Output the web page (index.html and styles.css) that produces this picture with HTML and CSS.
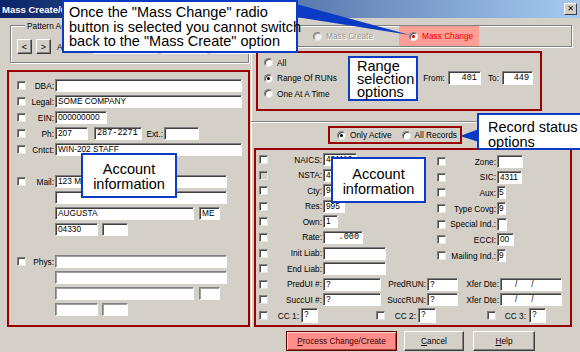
FILE: index.html
```html
<!DOCTYPE html>
<html>
<head>
<meta charset="utf-8">
<title>Mass Create/Change</title>
<link rel="stylesheet" href="styles.css">
</head>
<body>
<div class="win">
  <div class="title">
    <span class="title-text">Mass Create/Change</span>
    <span class="close">&#x2715;</span>
  </div>

  <div class="main">
    <div class="lcol">
      <div class="pattern">
        <span class="legend">Pattern Account</span>
        <div class="nav">
          <span class="navbtn">&lt;</span>
          <span class="navbtn">&gt;</span>
          <span class="navlbl">Account:</span>
          <span class="inp w65"></span>
          <span class="inp w47"></span>
          <span class="inp w47"></span>
        </div>
      </div>

      <div class="rbox lacct">
        <div class="row"><span class="cb"></span><span class="lbl">DBA:</span><span class="inp w187"></span></div>
        <div class="row"><span class="cb"></span><span class="lbl">Legal:</span><span class="inp w187">SOME COMPANY</span></div>
        <div class="row"><span class="cb"></span><span class="lbl">EIN:</span><span class="inp w52">000000000</span></div>
        <div class="row"><span class="cb"></span><span class="lbl">Ph:</span><span class="inp w33">207</span><span class="inp w48 mono ml6">287-2271</span><span class="lbl ext">Ext.:</span><span class="inp w35"></span></div>
        <div class="row"><span class="cb"></span><span class="lbl">Cntct:</span><span class="inp w187">WIN-202 STAFF</span></div>
        <div class="row"></div>
        <div class="row"><span class="cb"></span><span class="lbl">Mail:</span><span class="inp w172">123 MAIN ST</span></div>
        <div class="row"><span class="cb hide"></span><span class="lbl"></span><span class="inp w172"></span></div>
        <div class="row"><span class="cb hide"></span><span class="lbl"></span><span class="inp w139">AUGUSTA</span><span class="inp w21 ml5">ME</span></div>
        <div class="row"><span class="cb hide"></span><span class="lbl"></span><span class="inp w43">04330</span><span class="inp w26 ml4"></span></div>
        <div class="row"></div>
        <div class="row"><span class="cb"></span><span class="lbl">Phys:</span><span class="inp w172 light"></span></div>
        <div class="row"><span class="cb hide"></span><span class="lbl"></span><span class="inp w172 light"></span></div>
        <div class="row"><span class="cb hide"></span><span class="lbl"></span><span class="inp w139 light"></span><span class="inp w21 ml5 light"></span></div>
        <div class="row"><span class="cb hide"></span><span class="lbl"></span><span class="inp w43 light"></span><span class="inp w26 ml4 light"></span></div>
      </div>
    </div>

    <div class="rcol">
      <div class="mode">
        <span class="radio dis"><i class="rd"></i>Mass Create</span>
        <span class="radio hl"><i class="rd on"></i>Mass Change</span>
      </div>

      <div class="rbox range">
        <div class="radios">
          <span class="radio"><i class="rd"></i>All</span>
          <span class="radio"><i class="rd on"></i>Range Of RUNs</span>
          <span class="radio"><i class="rd"></i>One At A Time</span>
        </div>
        <div class="fromto">
          <span>From:</span>
          <span class="inp num w33 mono">401</span>
          <span class="to">To:</span>
          <span class="inp num w31 mono">449</span>
        </div>
      </div>

      <div class="sep"></div>

      <div class="rbox status">
        <span class="radio"><i class="rd on"></i>Only Active</span>
        <span class="radio"><i class="rd"></i>All Records</span>
      </div>

      <div class="rbox racct">
        <div class="top">
          <div class="colL">
            <div class="row"><span class="cb"></span><span class="lbl">NAICS:</span><span class="inp w34">481112</span></div>
            <div class="row"><span class="cb dim"></span><span class="lbl">NSTA:</span><span class="inp w34">4</span></div>
            <div class="row"><span class="cb"></span><span class="lbl">Cty:</span><span class="inp w26">96</span></div>
            <div class="row"><span class="cb"></span><span class="lbl">Res:</span><span class="inp w22">995</span></div>
            <div class="row"><span class="cb"></span><span class="lbl">Own:</span><span class="inp w15">1</span></div>
            <div class="row"><span class="cb"></span><span class="lbl">Rate:</span><span class="inp w40 num mono">.000</span></div>
            <div class="row"><span class="cb"></span><span class="lbl">Init Liab:</span><span class="inp w63"></span></div>
            <div class="row"><span class="cb"></span><span class="lbl">End Liab:</span><span class="inp w63"></span></div>
          </div>
          <div class="colR">
            <div class="row"><span class="cb"></span><span class="lbl">Zone:</span><span class="inp w26"></span></div>
            <div class="row"><span class="cb"></span><span class="lbl">SIC:</span><span class="inp w25">4311</span></div>
            <div class="row"><span class="cb"></span><span class="lbl">Aux:</span><span class="inp w9">5</span></div>
            <div class="row"><span class="cb"></span><span class="lbl">Type Covg:</span><span class="inp w9">9</span></div>
            <div class="row"><span class="cb"></span><span class="lbl">Special Ind.:</span><span class="inp w10"></span></div>
            <div class="row"><span class="cb"></span><span class="lbl">ECCI:</span><span class="inp w17">00</span></div>
            <div class="row"><span class="cb"></span><span class="lbl">Mailing Ind.:</span><span class="inp w9">9</span></div>
          </div>
        </div>
        <div class="row"><span class="cb"></span><span class="lbl">PredUI #:</span><span class="inp w58">?</span><span class="lbl run">PredRUN:</span><span class="inp w31">?</span><span class="lbl xfer">Xfer Dte:</span><span class="inp w62 date">/&nbsp;&nbsp;&nbsp;&nbsp;&nbsp;&nbsp;/</span></div>
        <div class="row"><span class="cb"></span><span class="lbl">SuccUI #:</span><span class="inp w58">?</span><span class="lbl run">SuccRUN:</span><span class="inp w31">?</span><span class="lbl xfer">Xfer Dte:</span><span class="inp w62 date">/&nbsp;&nbsp;&nbsp;&nbsp;&nbsp;&nbsp;/</span></div>
        <div class="row cc">
          <span class="cb"></span><span class="lbl c1">CC 1:</span><span class="inp w17 cci">?</span>
          <span class="cb c2b"></span><span class="lbl c2">CC 2:</span><span class="inp w18 cci">?</span>
          <span class="cb c3b"></span><span class="lbl c3">CC 3:</span><span class="inp w17 cci3">?</span>
        </div>
      </div>
    </div>
  </div>

  <div class="btnrow">
    <span class="btn process"><u>P</u>rocess Change/Create</span>
    <span class="btn cancel"><u>C</u>ancel</span>
    <span class="btn help"><u>H</u>elp</span>
  </div>

  <svg class="pointers" width="580" height="352" viewBox="0 0 580 352">
    <polygon points="296,4 296,17 410,35" fill="#0b3bc4"/>
    <polygon points="479,129 479,142 460,136" fill="#0b3bc4"/>
  </svg>

  <div class="callout c-top">Once the "Mass Change" radio<br>button is selected you cannot switch<br>back to the "Mass Create" option</div>
  <div class="callout c-lacct">Account<br>information</div>
  <div class="callout c-range">Range<br>selection<br>options</div>
  <div class="callout c-status">Record status<br>options</div>
  <div class="callout c-racct">Account<br>information</div>
</div>
</body>
</html>
```

FILE: styles.css
```css
* { box-sizing: border-box; }

body {
  margin: 0;
  background: #d4d0c8;
}

.win {
  position: relative;
  width: 580px;
  height: 352px;
  overflow: hidden;
  background: #d4d0c8;
  font-family: "Liberation Sans", Arial, sans-serif;
  font-size: 8.3px;
  color: #000;
}

/* title bar */
.title {
  height: 18px;
  display: flex;
  align-items: center;
  padding-left: 2px;
  background: linear-gradient(to right, #0a246a, #a6caf0);
}
.title-text {
  color: #fff;
  font-weight: bold;
  font-size: 9.5px;
}
.close {
  margin-left: auto;
  margin-right: 3px;
  width: 13px;
  height: 12px;
  background: #d4d0c8;
  border: 1px solid;
  border-color: #fff #404040 #404040 #fff;
  font-family: "DejaVu Sans", sans-serif;
  font-size: 8px;
  line-height: 10px;
  text-align: center;
  font-weight: bold;
}

.main {
  display: flex;
  height: 309px;
}

/* left column */
.lcol {
  width: 251px;
  padding-left: 7px;
  display: flex;
  flex-direction: column;
  flex: none;
}
.pattern {
  margin: 7px 0 0 3px;
  padding-left: 6px;
  width: 239px;
  height: 38px;
  border: 1px solid #808080;
  box-shadow: inset 1px 1px 0 #fff, 1px 1px 0 #fff;
}
.legend {
  display: block;
  width: max-content;
  margin: -5px 0 0 8px;
  padding: 0 2px;
  line-height: 10px;
  background: #d4d0c8;
}
.nav {
  margin-top: 8px;
  display: flex;
  align-items: center;
  gap: 3px;
}
.navbtn {
  flex: none;
  width: 15px;
  height: 15px;
  display: flex;
  align-items: center;
  justify-content: center;
  border: 1px solid;
  border-color: #fff #404040 #404040 #fff;
  box-shadow: inset -1px -1px 0 #808080;
  font-size: 9px;
}
.navbtn + .navbtn { margin-left: 1px; }
.navlbl { margin-left: 3px; }

.rbox { border: 2px solid #990000; }

.lacct {
  margin-top: 7px;
  width: 243px;
  height: 257px;
  padding: 7px 0 0 8px;
  display: flex;
  flex-direction: column;
  gap: 3px;
}
.row {
  display: flex;
  align-items: center;
  height: 13px;
  flex: none;
}
.lbl {
  flex: none;
  text-align: right;
  white-space: nowrap;
}
.lacct .lbl { width: 29px; padding-right: 1px; }
.lacct .lbl.ext { width: 22px; padding-right: 1px; }

.cb {
  flex: none;
  width: 9px;
  height: 9px;
  background: #fff;
  border: 1px solid;
  border-color: #808080 #e4e4e4 #e4e4e4 #808080;
  box-shadow: inset 1px 1px 0 #505050;
}
.cb.dim { background: #d4d0c8; }
.cb.hide { visibility: hidden; }

.inp {
  flex: none;
  height: 13px;
  background: #fff;
  border: 1px solid;
  border-color: #808080 #fff #fff #808080;
  box-shadow: inset 1px 1px 0 #404040;
  padding: 0 0 0 2px;
  font-size: 8.3px;
  line-height: 11px;
  white-space: nowrap;
  overflow: hidden;
}
.inp.light { box-shadow: inset 1px 1px 0 #a0a0a0; }
.inp.num { text-align: right; padding: 0 3px 0 0; }
.mono { font-family: "Liberation Mono", monospace; font-size: 8.5px; }
.nav .inp { height: 14px; }

.w9 { width: 9px; padding-left: 1px; }
.w10 { width: 10px; }
.w15 { width: 15px; }
.w17 { width: 17px; }
.w18 { width: 18px; }
.w21 { width: 21px; }
.w22 { width: 22px; }
.w25 { width: 25px; }
.w26 { width: 26px; }
.w31 { width: 31px; }
.w33 { width: 33px; }
.w34 { width: 34px; }
.w35 { width: 35px; }
.w40 { width: 40px; }
.w43 { width: 43px; }
.w47 { width: 47px; }
.w48 { width: 48px; }
.w52 { width: 52px; }
.w58 { width: 58px; }
.w62 { width: 62px; }
.w63 { width: 63px; }
.w65 { width: 65px; }
.w139 { width: 139px; }
.w172 { width: 172px; }
.w187 { width: 187px; }
.ml4 { margin-left: 4px; }
.ml5 { margin-left: 5px; }
.ml6 { margin-left: 6px; }

/* right column */
.rcol {
  flex: 1;
  display: flex;
  flex-direction: column;
  box-shadow: inset 1px 0 0 #fff;
}

.radio {
  display: flex;
  align-items: center;
  gap: 4px;
  white-space: nowrap;
}
.rd {
  flex: none;
  width: 9px;
  height: 9px;
  border-radius: 50%;
  background: #fff;
  border: 1px solid;
  border-color: #808080 #e4e4e4 #e4e4e4 #808080;
  box-shadow: inset 1px 1px 0 #505050;
  position: relative;
}
.rd.on::after {
  content: "";
  position: absolute;
  left: 2px;
  top: 2px;
  width: 3px;
  height: 3px;
  border-radius: 50%;
  background: #000;
}

.mode {
  margin: 7px 0 0 1px;
  width: 320px;
  height: 22px;
  border: 1px solid #808080;
  box-shadow: inset 1px 1px 0 #fff, 1px 1px 0 #fff;
  display: flex;
  align-items: stretch;
}
.mode .dis {
  width: 146px;
  padding-left: 60px;
  color: #9a9a9a;
  text-shadow: 1px 1px 0 #fff;
}
.mode .dis .rd { background: #f0f0f0; box-shadow: inset 1px 1px 0 #a0a0a0; }
.mode .hl {
  width: 80px;
  padding-left: 10px;
  background: #ff9e96;
  color: #f00000;
}
.mode .hl .rd.on::after { background: #c00000; }

.range {
  margin: 4px 0 0 5px;
  width: 286px;
  height: 60px;
  display: flex;
}
.radios {
  padding: 2px 0 0 6px;
  display: flex;
  flex-direction: column;
}
.radios .radio { height: 15.5px; }
.fromto {
  margin: 18px 7px 0 auto;
  height: 14px;
  display: flex;
  align-items: center;
  gap: 3px;
}
.fromto .inp { height: 14px; line-height: 12px; }
.fromto .to { margin-left: 4px; }

.sep {
  margin-top: 10px;
  width: 321px;
  height: 2px;
  border-top: 1px solid #808080;
  border-bottom: 1px solid #fff;
}

.status {
  margin: 3px 0 0 77px;
  width: 134px;
  height: 18px;
  display: flex;
  align-items: center;
  padding-left: 7px;
  gap: 10px;
}

.racct {
  margin: 4px 0 0 3px;
  width: 318px;
  height: 179px;
  padding: 3px 0 0 3px;
  display: flex;
  flex-direction: column;
  gap: 2.6px;
}
.racct .top { display: flex; }
.racct .colL {
  width: 178px;
  display: flex;
  flex-direction: column;
  gap: 2.6px;
}
.racct .colR {
  margin-top: 2px;
  display: flex;
  flex-direction: column;
  gap: 2.7px;
}
.racct .lbl { width: 55px; padding-right: 1px; }
.racct .colR .lbl { width: 51px; }
.racct .lbl.run { width: 46px; }
.racct .lbl.xfer { width: 42px; }
.racct .inp.date { padding-left: 14px; }
.racct .cc { height: 16px; margin-top: -1px; }
.racct .cc .inp { height: 15px; }
.racct .lbl.c1 { width: 33px; padding-right: 2px; }
.racct .cc .cb.c2b { margin-left: 58px; }
.racct .lbl.c2 { width: 33px; padding-right: 2px; }
.racct .cc .cb.c3b { margin-left: 51px; }
.racct .lbl.c3 { width: 33px; padding-right: 3px; }

/* buttons */
.btnrow {
  display: flex;
  padding: 4px 0 0 286px;
}
.btn {
  height: 20px;
  display: flex;
  align-items: center;
  justify-content: center;
  border: 1px solid;
  border-color: #fff #404040 #404040 #fff;
  box-shadow: inset -1px -1px 0 #808080;
  font-size: 8.3px;
}
.btn.process {
  width: 111px;
  background: #ff8e8a;
  border-color: #5a0000;
  box-shadow: inset 1px 1px 0 #ffd0d0, inset -1px -1px 0 #b04040;
  color: #400000;
}
.btn.cancel { width: 60px; margin-left: 7px; }
.btn.help { width: 62px; margin-left: 9px; }

/* annotations */
.pointers {
  position: absolute;
  left: 0;
  top: 0;
  pointer-events: none;
}
.callout {
  position: absolute;
  background: #fff;
  border: 2px solid #0b3bc4;
  font-size: 14.5px;
  line-height: 14.5px;
  color: #000;
  white-space: nowrap;
}
.c-top {
  left: 62px;
  top: 0;
  width: 236px;
  height: 53px;
  padding: 3px 0 0 5px;
}
.c-lacct {
  left: 81px;
  top: 153px;
  width: 96px;
  height: 45px;
  padding-top: 7px;
  text-align: center;
}
.c-range {
  left: 348px;
  top: 56px;
  width: 70px;
  height: 45px;
  padding: 2px 0 0 7px;
  line-height: 13px;
}
.c-status {
  left: 477px;
  top: 113px;
  width: 106px;
  height: 37px;
  padding: 5px 0 0 9px;
}
.c-racct {
  left: 331px;
  top: 157px;
  width: 95px;
  height: 46px;
  padding-top: 8px;
  text-align: center;
}
```
